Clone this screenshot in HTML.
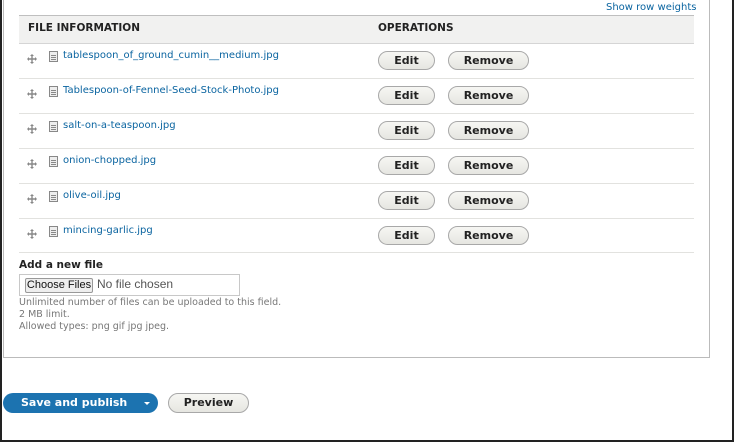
<!DOCTYPE html>
<html><head><style>
*{margin:0;padding:0;box-sizing:border-box}
body{width:735px;height:443px;background:#fff;position:relative;overflow:hidden;font-family:"DejaVu Sans","Liberation Sans",sans-serif;font-size:11px;color:#222}
.a{position:absolute;white-space:nowrap}
.frame{left:0;top:-2px;width:734px;height:444px;border:2px solid #222;border-top:none}
.fs{left:3px;top:-2px;width:707px;height:360px;border:1px solid #bbb;border-top:none}
.hdr{left:19px;top:15px;width:675px;height:29px;background:#f1f1f0;border-top:1px solid #bfbfbf;border-bottom:1px solid #d5d5d5}
.hdr span{position:absolute;top:6px;font-weight:bold;font-size:10.5px;color:#222}
.line{left:19px;width:675px;height:1px;background:#e2e2df}
.fn{left:63px;color:#0a64a0;font-size:10px}
.btn{height:19px;border:1px solid #a8a8a8;border-radius:10px;background:linear-gradient(#f6f6f3,#e6e6e1);font-weight:bold;font-size:11px;text-align:center;line-height:17px;color:#222}
.drag{left:27px;width:10px;height:10px}
.ic{left:49px;width:9px;height:11px;border:1px solid #888;background:#eee}
.ic:after{content:"";position:absolute;left:1px;top:3px;width:5px;height:5px;background:repeating-linear-gradient(#888 0 1px,transparent 1px 2px)}
.small{color:#777;font-size:9.5px;left:19px}
</style></head><body>
<div class="a frame"></div>
<div class="a fs"></div>
<div class="a" style="left:606px;top:2px;color:#0a64a0;font-size:10px">Show row weights</div>
<div class="a hdr"><span style="left:9px">FILE INFORMATION</span><span style="left:359px">OPERATIONS</span></div>

<div class="a line" style="top:78px"></div>
<div class="a line" style="top:113px"></div>
<div class="a line" style="top:148px"></div>
<div class="a line" style="top:183px"></div>
<div class="a line" style="top:218px"></div>
<div class="a line" style="top:252px"></div>

<div class="a" style="left:0;top:44px">
 <svg class="a drag" style="top:10px" viewBox="0 0 10 10"><path d="M5 0L7 2H3ZM5 10L3 8H7ZM0 5L2 3V7ZM10 5L8 7V3ZM4.3 2h1.4v6H4.3ZM2 4.3h6v1.4H2Z" fill="#888"/></svg>
 <div class="a ic" style="top:7px"></div>
 <div class="a fn" style="top:6px">tablespoon_of_ground_cumin__medium.jpg</div>
 <div class="a btn" style="left:378px;top:7px;width:57px">Edit</div>
 <div class="a btn" style="left:448px;top:7px;width:81px">Remove</div>
</div>
<div class="a" style="left:0;top:79px">
 <svg class="a drag" style="top:10px" viewBox="0 0 10 10"><path d="M5 0L7 2H3ZM5 10L3 8H7ZM0 5L2 3V7ZM10 5L8 7V3ZM4.3 2h1.4v6H4.3ZM2 4.3h6v1.4H2Z" fill="#888"/></svg>
 <div class="a ic" style="top:7px"></div>
 <div class="a fn" style="top:6px">Tablespoon-of-Fennel-Seed-Stock-Photo.jpg</div>
 <div class="a btn" style="left:378px;top:7px;width:57px">Edit</div>
 <div class="a btn" style="left:448px;top:7px;width:81px">Remove</div>
</div>
<div class="a" style="left:0;top:114px">
 <svg class="a drag" style="top:10px" viewBox="0 0 10 10"><path d="M5 0L7 2H3ZM5 10L3 8H7ZM0 5L2 3V7ZM10 5L8 7V3ZM4.3 2h1.4v6H4.3ZM2 4.3h6v1.4H2Z" fill="#888"/></svg>
 <div class="a ic" style="top:7px"></div>
 <div class="a fn" style="top:6px">salt-on-a-teaspoon.jpg</div>
 <div class="a btn" style="left:378px;top:7px;width:57px">Edit</div>
 <div class="a btn" style="left:448px;top:7px;width:81px">Remove</div>
</div>
<div class="a" style="left:0;top:149px">
 <svg class="a drag" style="top:10px" viewBox="0 0 10 10"><path d="M5 0L7 2H3ZM5 10L3 8H7ZM0 5L2 3V7ZM10 5L8 7V3ZM4.3 2h1.4v6H4.3ZM2 4.3h6v1.4H2Z" fill="#888"/></svg>
 <div class="a ic" style="top:7px"></div>
 <div class="a fn" style="top:6px">onion-chopped.jpg</div>
 <div class="a btn" style="left:378px;top:7px;width:57px">Edit</div>
 <div class="a btn" style="left:448px;top:7px;width:81px">Remove</div>
</div>
<div class="a" style="left:0;top:184px">
 <svg class="a drag" style="top:10px" viewBox="0 0 10 10"><path d="M5 0L7 2H3ZM5 10L3 8H7ZM0 5L2 3V7ZM10 5L8 7V3ZM4.3 2h1.4v6H4.3ZM2 4.3h6v1.4H2Z" fill="#888"/></svg>
 <div class="a ic" style="top:7px"></div>
 <div class="a fn" style="top:6px">olive-oil.jpg</div>
 <div class="a btn" style="left:378px;top:7px;width:57px">Edit</div>
 <div class="a btn" style="left:448px;top:7px;width:81px">Remove</div>
</div>
<div class="a" style="left:0;top:219px">
 <svg class="a drag" style="top:10px" viewBox="0 0 10 10"><path d="M5 0L7 2H3ZM5 10L3 8H7ZM0 5L2 3V7ZM10 5L8 7V3ZM4.3 2h1.4v6H4.3ZM2 4.3h6v1.4H2Z" fill="#888"/></svg>
 <div class="a ic" style="top:7px"></div>
 <div class="a fn" style="top:6px">mincing-garlic.jpg</div>
 <div class="a btn" style="left:378px;top:7px;width:57px">Edit</div>
 <div class="a btn" style="left:448px;top:7px;width:81px">Remove</div>
</div>

<div class="a" style="left:19px;top:259px;font-weight:bold;font-size:10.5px">Add a new file</div>
<div class="a" style="left:19px;top:274px;width:221px;height:22px;border:1px solid #c8c8c8;background:#fff"></div>
<div class="a" style="left:25px;top:278px;width:68px;height:15px;border:1px solid #999;border-radius:2px;background:#eee;font-family:'Liberation Sans',sans-serif;font-size:11px;text-align:center;line-height:13px;color:#111">Choose Files</div>
<div class="a" style="left:97px;top:277px;font-family:'Liberation Sans',sans-serif;font-size:12px;color:#555">No file chosen</div>
<div class="a small" style="top:297px">Unlimited number of files can be uploaded to this field.</div>
<div class="a small" style="top:309px">2 MB limit.</div>
<div class="a small" style="top:321px">Allowed types: png gif jpg jpeg.</div>

<div class="a" style="left:3px;top:393px;width:155px;height:20px;border-radius:10px;background:#1c73b0;color:#fff;font-weight:bold;font-size:11px;line-height:20px;padding-left:18px">Save and publish</div>
<div class="a" style="left:144px;top:402px;width:0;height:0;border-left:3px solid transparent;border-right:3px solid transparent;border-top:3px solid #fff"></div>
<div class="a btn" style="left:168px;top:393px;width:81px;height:20px;line-height:18px">Preview</div>
</body></html>
